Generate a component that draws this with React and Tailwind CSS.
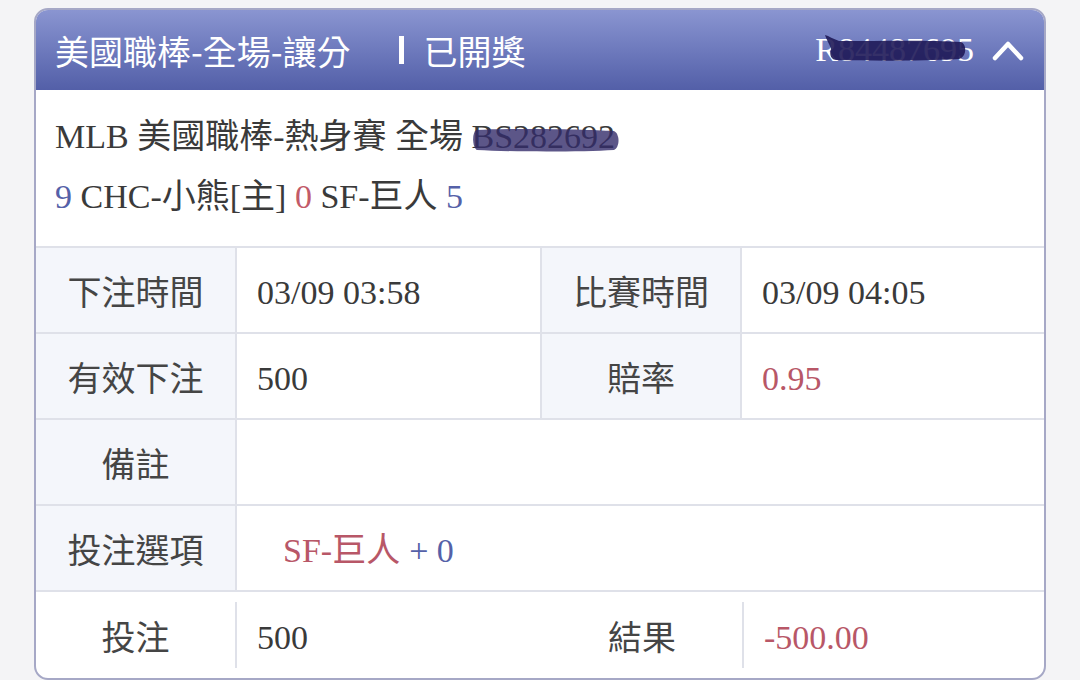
import React from "react";

const SERIF = { fontFamily: '"Liberation Serif", "Noto Sans CJK TC", serif' };

function Label({ children, className = "" }) {
  return (
    <div className={"flex items-center justify-center text-[34px] text-[#454545] " + className} style={{ fontFamily: '"Noto Sans CJK TC", sans-serif' }}>
      {children}
    </div>
  );
}

function Value({ children, className = "" }) {
  return (
    <div className={"flex items-center pl-[20px] pt-[4px] text-[34px] text-[#3a3a3a] " + className} style={SERIF}>
      {children}
    </div>
  );
}

export default function App() {
  return (
    <div className="w-[1080px] h-[680px] bg-[#f4f4f6] pt-[8px] pl-[34px] overflow-hidden">
      <div className="w-[1012px] h-[672px] border-2 border-[#a6a8c6] rounded-[14px] bg-white overflow-hidden flex flex-col">
        {/* Header */}
        <div className="h-[80px] shrink-0 bg-gradient-to-b from-[#8a95d1] to-[#535fa8] flex items-center pl-[19px] pr-[20px] text-white" style={{ fontFamily: '"Noto Sans CJK TC", sans-serif' }}>
          <span className="text-[34px]">美國職棒-全場-讓分</span>
          <span className="ml-[48px] w-[5px] h-[28px] bg-white" />
          <span className="ml-[20px] text-[34px]">已開獎</span>
          <div className="ml-auto flex items-center">
            <span className="relative text-[34px] text-white leading-none" style={SERIF}>
              R84487695
              <svg className="absolute left-[8px] top-[1px] w-[144px] h-[30px]" viewBox="0 0 144 30">
                <path
                  d="M2 1 C6 2, 10 5, 16 7 C60 7, 110 6, 138 8 C144 10, 144 23, 136 25 C100 27, 50 27, 14 26 C8 26, 6 21, 8 15 C6 9, 3 5, 2 1 Z"
                  fill="#1f1a58"
                  opacity="0.9"
                />
              </svg>
            </span>
            <svg className="ml-[18px] w-[32px] h-[22px]" viewBox="0 0 32 22">
              <polyline points="3,19 16,5 29,19" fill="none" stroke="white" strokeWidth="4.5" strokeLinecap="round" strokeLinejoin="round" />
            </svg>
          </div>
        </div>

        {/* Info */}
        <div className="h-[158px] shrink-0 border-b-2 border-[#dfe1e9] pl-[19px] pt-[26px] flex flex-col gap-[18px] text-[34px] text-[#3a3a3a]" style={SERIF}>
          <div className="leading-[42px]">
            MLB 美國職棒-熱身賽 全場{" "}
            <span className="relative">
              BS282692
              <svg className="absolute left-[0px] top-[10px] w-[148px] h-[24px]" viewBox="0 0 148 24">
                <path
                  d="M4 2 C40 0, 110 1, 142 3 C148 6, 148 19, 142 22 C110 24, 40 24, 5 22 C0 19, 0 5, 4 2 Z"
                  fill="#332c6a"
                  opacity="0.8"
                />
              </svg>
            </span>
          </div>
          <div className="leading-[42px]">
            <span className="text-[#5561a8]">9</span> CHC-小熊[主] <span className="text-[#c25a68]">0</span> SF-巨人 <span className="text-[#5561a8]">5</span>
          </div>
        </div>

        {/* Table */}
        <div className="flex h-[86px] shrink-0 border-b-2 border-[#dfe1e9]">
          <Label className="w-[201px] border-r-2 border-[#dfe1e9] bg-[#f4f6fb]">下注時間</Label>
          <Value className="w-[305px] border-r-2 border-[#dfe1e9]">03/09 03:58</Value>
          <Label className="w-[200px] border-r-2 border-[#dfe1e9] bg-[#f4f6fb]">比賽時間</Label>
          <Value className="flex-1">03/09 04:05</Value>
        </div>
        <div className="flex h-[86px] shrink-0 border-b-2 border-[#dfe1e9]">
          <Label className="w-[201px] border-r-2 border-[#dfe1e9] bg-[#f4f6fb]">有效下注</Label>
          <Value className="w-[305px] border-r-2 border-[#dfe1e9]">500</Value>
          <Label className="w-[200px] border-r-2 border-[#dfe1e9] bg-[#f4f6fb]">賠率</Label>
          <Value className="flex-1 text-[#b85767]">0.95</Value>
        </div>
        <div className="flex h-[86px] shrink-0 border-b-2 border-[#dfe1e9]">
          <Label className="w-[201px] border-r-2 border-[#dfe1e9] bg-[#f4f6fb]">備註</Label>
          <Value className="flex-1"></Value>
        </div>
        <div className="flex h-[86px] shrink-0 border-b-2 border-[#dfe1e9]">
          <Label className="w-[201px] border-r-2 border-[#dfe1e9] bg-[#f4f6fb]">投注選項</Label>
          <Value className="flex-1 pl-[46px]">
            <span className="text-[#b85767]">SF-巨人</span>
            <span className="ml-[9px] text-[#5561a8]">+ 0</span>
          </Value>
        </div>
        <div className="flex flex-1 items-center">
          <Label className="w-[199px] h-full">投注</Label>
          <div className="w-[2px] h-[66px] bg-[#dfe1e9]" />
          <Value className="w-[305px] h-full">500</Value>
          <Label className="w-[200px] h-full">結果</Label>
          <div className="w-[2px] h-[66px] bg-[#dfe1e9]" />
          <Value className="flex-1 h-full text-[#b85767]">-500.00</Value>
        </div>
      </div>
    </div>
  );
}
